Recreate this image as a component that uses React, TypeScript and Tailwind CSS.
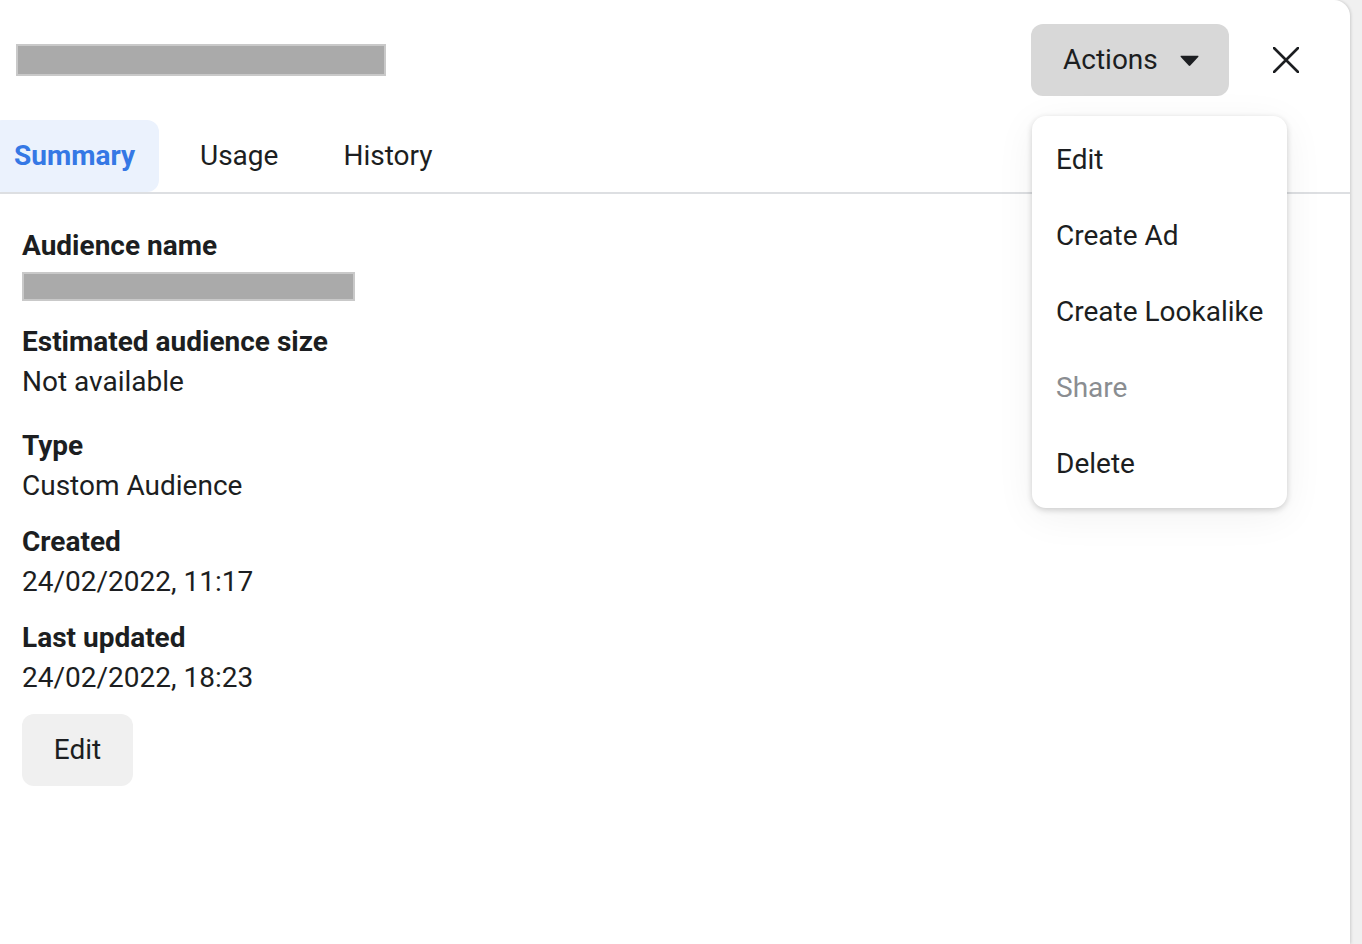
import React from "react";

export default function App() {
  const font = { fontFamily: "Roboto, 'Liberation Sans', sans-serif" };
  return (
    <div className="w-[1362px] h-[944px] bg-[#f0f0f0] flex overflow-hidden text-[#1c1e21]" style={font}>
      <div className="relative w-[1350px] h-[944px] bg-white rounded-tr-[16px] shadow-[1px_0_3px_rgba(0,0,0,0.15)] flex flex-col">
        {/* Header */}
        <div className="mt-[24px] h-[72px] flex items-center justify-between pl-[16px] pr-[40px]">
          <div className="w-[370px] h-[32px] bg-[#aaaaaa] border-2 border-[#c9c9c9]" />
          <div className="flex items-center gap-[33px]">
            <button className="w-[198px] h-[72px] rounded-[12px] bg-[#d8d8d8] flex items-center pl-[32px] gap-[22px] text-[28px] leading-none text-[#1c1e21]">
              <span>Actions</span>
              <svg width="19" height="12" viewBox="0 0 19 12" className="mt-[1px]">
                <path d="M1 0.8 H18 Q19 0.8 18.2 1.9 L10.3 10.6 Q9.5 11.4 8.7 10.6 L0.8 1.9 Q0 0.8 1 0.8 Z" fill="#1c1e21" />
              </svg>
            </button>
            <button className="w-[48px] h-[48px] flex items-center justify-center">
              <svg width="26" height="26" viewBox="0 0 26 26">
                <path d="M1 1 L25 25 M25 1 L1 25" stroke="#1c1e21" strokeWidth="2.6" strokeLinecap="round" />
              </svg>
            </button>
          </div>
        </div>

        {/* Tabs */}
        <div className="mt-[24px] border-b-2 border-[#dddfe2] flex">
          <div className="flex gap-[17px] ml-[-10px] text-[28px] leading-none">
            <div className="h-[72px] px-[24px] flex items-center rounded-[12px] bg-[#ebf2fd] text-[#3578e5] font-bold">Summary</div>
            <div className="h-[72px] px-[24px] flex items-center">Usage</div>
            <div className="h-[72px] px-[24px] flex items-center">History</div>
          </div>
        </div>

        {/* Content */}
        <div className="pl-[22px] pt-[32px] flex flex-col text-[28px] leading-[40px]">
          <div className="font-bold">Audience name</div>
          <div className="mt-[6px] w-[333px] h-[29px] bg-[#aaaaaa] border-2 border-[#c9c9c9]" />
          <div className="mt-[21px] font-bold">Estimated audience size</div>
          <div>Not available</div>
          <div className="mt-[24px] font-bold">Type</div>
          <div>Custom Audience</div>
          <div className="mt-[16px] font-bold">Created</div>
          <div>24/02/2022, 11:17</div>
          <div className="mt-[16px] font-bold">Last updated</div>
          <div>24/02/2022, 18:23</div>
          <button className="mt-[16px] w-[111px] h-[72px] rounded-[12px] bg-[#f0f0f0] flex items-center justify-center text-[28px] leading-none">Edit</button>
        </div>

        {/* Dropdown menu */}
        <div className="absolute left-[1032px] top-[116px] w-[255px] bg-white rounded-[14px] shadow-[0_2px_6px_rgba(0,0,0,0.18),0_8px_40px_rgba(0,0,0,0.06)] py-[6px] text-[28px] leading-none">
          <div className="h-[76px] flex items-center pl-[24px]">Edit</div>
          <div className="h-[76px] flex items-center pl-[24px]">Create Ad</div>
          <div className="h-[76px] flex items-center pl-[24px]">Create Lookalike</div>
          <div className="h-[76px] flex items-center pl-[24px] text-[#8a8d91]">Share</div>
          <div className="h-[76px] flex items-center pl-[24px]">Delete</div>
        </div>
      </div>
    </div>
  );
}
